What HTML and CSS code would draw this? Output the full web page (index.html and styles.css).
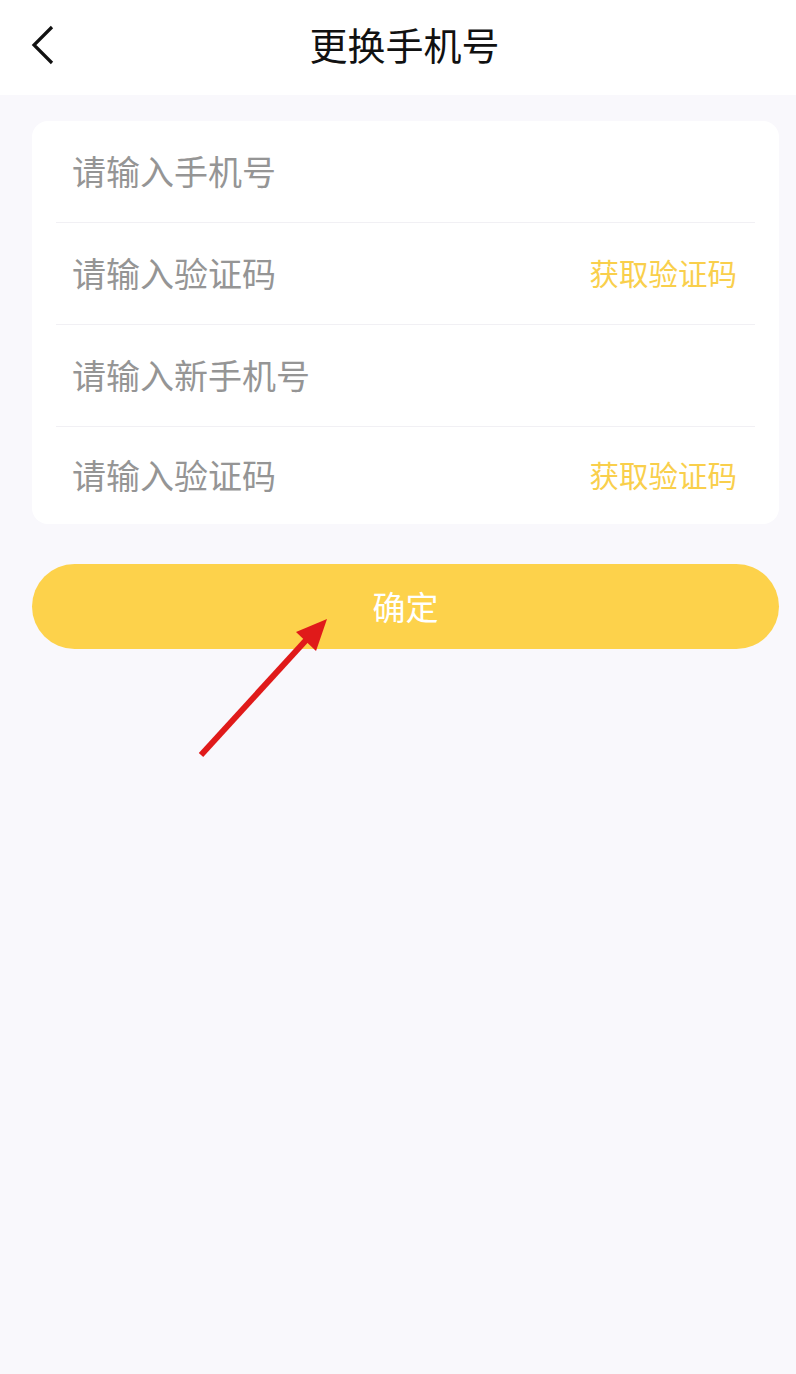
FILE: index.html
```html
<!DOCTYPE html>
<html lang="zh-CN">
<head>
<meta charset="utf-8">
<title>更换手机号</title>
<link rel="stylesheet" href="styles.css">
</head>
<body>
<div class="page">
  <header class="topbar">
    <span class="back">
      <svg width="30" height="42" viewBox="0 0 30 42"><polyline points="21,3 3,21 21,39" fill="none" stroke="#111" stroke-width="3.2" stroke-linecap="butt" stroke-linejoin="miter"/></svg>
    </span>
    <h1 class="title">更换手机号</h1>
  </header>
  <main class="content">
    <section class="card">
      <div class="row"><span class="ph">请输入手机号</span></div>
      <div class="row"><span class="ph">请输入验证码</span><span class="code">获取验证码</span></div>
      <div class="row"><span class="ph">请输入新手机号</span></div>
      <div class="row"><span class="ph">请输入验证码</span><span class="code">获取验证码</span></div>
    </section>
    <button class="confirm">确定</button>
  </main>
  <svg class="arrow" width="796" height="1374" viewBox="0 0 796 1374">
    <line x1="201" y1="755" x2="308" y2="638" stroke="#e01a1a" stroke-width="6"/>
    <polygon points="327,619 296,632 316,651" fill="#e01a1a"/>
  </svg>
</div>
</body>
</html>
```
FILE: styles.css
```css
html, body {
  margin: 0;
  padding: 0;
}
body {
  background: #f9f8fc;
  font-family: "Noto Sans CJK SC", "Noto Sans", sans-serif;
  width: 796px;
  height: 1374px;
  overflow: hidden;
}
.page {
  position: relative;
  width: 796px;
  height: 1374px;
}
.topbar {
  height: 95px;
  background: #ffffff;
  display: flex;
  align-items: center;
  justify-content: center;
  position: relative;
}
.back {
  position: absolute;
  left: 31px;
  top: 24px;
  display: block;
  width: 30px;
  height: 42px;
}
.back svg { display: block; }
.title {
  margin: 0;
  font-size: 38px;
  font-weight: 400;
  color: #111;
  line-height: 1;
  margin-left: 13px;
  margin-top: -8px;
}
.content {
  padding: 26px 0 0 32px;
}
.card {
  width: 747px;
  background: #ffffff;
  border-radius: 16px;
  padding: 0;
  box-sizing: border-box;
}
.row {
  margin: 0 24px;
  padding: 0 18px 0 16px;
  height: 101px;
  display: flex;
  align-items: center;
  justify-content: space-between;
  border-bottom: 1px solid #f1f0f4;
}
.row:last-child {
  border-bottom: none;
  height: 97px;
}
.ph {
  font-size: 34px;
  color: #959595;
  line-height: 1;
  margin-top: -2px;
}
.code {
  font-size: 29.5px;
  color: #f9cf4c;
  line-height: 1;
  margin-top: -2px;
}
.confirm {
  display: flex;
  align-items: center;
  justify-content: center;
  margin-top: 40px;
  width: 747px;
  height: 85px;
  border: none;
  border-radius: 43px;
  background: #fdd24b;
  color: #ffffff;
  font-family: "Noto Sans CJK SC", "Noto Sans", sans-serif;
  font-size: 33px;
  padding: 0;
  padding-bottom: 2px;
}
.arrow {
  position: absolute;
  left: 0;
  top: 0;
  pointer-events: none;
}
```
